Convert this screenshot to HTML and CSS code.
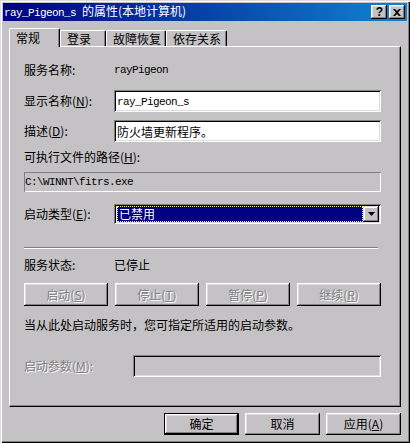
FILE: index.html
```html
<!DOCTYPE html>
<html lang="zh-CN">
<head>
    <meta charset="UTF-8">
    <title>ray_Pigeon_s 的属性(本地计算机)</title>
    <link rel="stylesheet" href="styles.css">
</head>
<body>
    <div class="window">
        <div class="titlebar">
            <span class="title"><span class="mono">ray_Pigeon_s </span>的属性(本地计算机)</span>
            <div class="title-buttons">
                <span class="tbtn help">?</span>
                <span class="tbtn">
                    <svg width="8" height="7" viewBox="0 0 8 7"><path d="M0 0h2l2 2 2-2h2L5 3.5 8 7H6L4 5 2 7H0l3-3.5z" fill="#000"/></svg>
                </span>
            </div>
        </div>

        <div class="tabs">
            <div class="tab active" style="width: 51px">常规</div>
            <div class="tab" style="width: 46px">登录</div>
            <div class="tab" style="width: 60px">故障恢复</div>
            <div class="tab" style="width: 61px">依存关系</div>
        </div>

        <div class="panel">
            <div class="field row-name">
                <span>服务名称:</span>
                <span class="mono">rayPigeon</span>
            </div>

            <div class="field row-display">
                <span>显示名称(<u>N</u>):</span>
                <div class="input"><span class="mono">ray_Pigeon_s</span></div>
            </div>

            <div class="field row-desc">
                <span>描述(<u>D</u>):</span>
                <div class="input">防火墙更新程序。</div>
            </div>

            <div class="row-path-label">可执行文件的路径(<u>H</u>):</div>
            <div class="static"><span class="mono">C:\WINNT\fitrs.exe</span></div>

            <div class="field row-startup">
                <span>启动类型(<u>E</u>):</span>
                <div class="combo">
                    <div class="combo-value">已禁用</div>
                    <div class="combo-btn">
                        <svg width="7" height="4" viewBox="0 0 7 4"><path d="M0 0h7L3.5 4z" fill="#000"/></svg>
                    </div>
                </div>
            </div>

            <div class="separator"></div>

            <div class="field row-status">
                <span>服务状态:</span>
                <span>已停止</span>
            </div>

            <div class="service-buttons">
                <div class="btn disabled">启动(<u>S</u>)</div>
                <div class="btn disabled">停止(<u>T</u>)</div>
                <div class="btn disabled">暂停(<u>P</u>)</div>
                <div class="btn disabled">继续(<u>R</u>)</div>
            </div>

            <div class="hint">当从此处启动服务时，您可指定所适用的启动参数。</div>

            <div class="field row-params">
                <span class="disabled-text">启动参数(<u>M</u>):</span>
                <div class="input input-disabled"></div>
            </div>
        </div>

        <div class="footer">
            <div class="btn default">确定</div>
            <div class="btn">取消</div>
            <div class="btn">应用(<u>A</u>)</div>
        </div>
    </div>
</body>
</html>
```

FILE: styles.css
```css
* {
    box-sizing: border-box;
}
body {
    margin: 0;
    background: #c4c2c4;
    font-family: "Noto Sans CJK SC", sans-serif;
    font-size: 12px;
    line-height: 14px;
    color: #000;
}
u {
    text-decoration: underline;
    text-underline-offset: 1px;
}
.mono {
    font-family: "Liberation Mono", monospace;
    font-size: 11px;
    letter-spacing: -0.6px;
    white-space: pre;
}
.window {
    width: 410px;
    height: 443px;
    padding: 3px;
    background: #c4c2c4;
    box-shadow: inset 1px 1px #dcdcdc, inset 2px 2px #fff, inset -1px -1px #000, inset -2px -2px #808080;
}
.titlebar {
    height: 18px;
    display: flex;
    align-items: center;
    justify-content: space-between;
    padding: 0 2px 0 1px;
    background: linear-gradient(to right, #000080, #1084d0);
    color: #fff;
}
.title-buttons {
    display: flex;
    gap: 2px;
}
.tbtn {
    width: 16px;
    height: 14px;
    display: flex;
    align-items: center;
    justify-content: center;
    background: #c4c2c4;
    color: #000;
    box-shadow: inset -1px -1px #000, inset 1px 1px #fff, inset -2px -2px #808080, inset 2px 2px #dcdcdc;
}
.tbtn.help {
    font-family: "Liberation Sans", sans-serif;
    font-weight: bold;
    font-size: 12px;
    padding-left: 1px;
}
.tabs {
    display: flex;
    align-items: flex-end;
    height: 18px;
    margin: 7px 6px 0;
    position: relative;
    z-index: 1;
}
.tab {
    height: 16px;
    padding-left: 6px;
    line-height: 16px;
    border-top: 1px solid #fff;
    border-left: 1px solid #fff;
    border-right: 1px solid #000;
    border-radius: 2px 2px 0 0;
    box-shadow: inset -1px 0 #808080;
    background: #c4c2c4;
}
.tab.active {
    height: 19px;
    margin-bottom: -1px;
    line-height: 18px;
}
.panel {
    height: 361px;
    margin: 0 6px;
    padding: 12px 19px 0 14px;
    border: 1px solid;
    border-color: #fff #000 #000 #fff;
    box-shadow: inset -1px -1px #808080;
}
.field {
    display: grid;
    grid-template-columns: 90px 1fr;
    align-items: center;
}
.row-name {
    height: 22px;
}
.row-display {
    margin-top: 9px;
}
.row-desc {
    margin-top: 8px;
}
.input {
    height: 22px;
    display: flex;
    align-items: center;
    padding: 1px 3px 0;
    background: #fff;
    box-shadow: inset 1px 1px #808080, inset -1px -1px #fff, inset 2px 2px #000, inset -2px -2px #dcdcdc;
}
.input-disabled {
    background: #c4c2c4;
}
.row-path-label {
    height: 16px;
    line-height: 16px;
    margin-top: 7px;
}
.static {
    height: 20px;
    margin-top: 7px;
    padding-left: 1px;
    display: flex;
    align-items: center;
    box-shadow: inset 1px 1px #808080, inset -1px -1px #fff;
}
.row-startup {
    margin-top: 12px;
}
.combo {
    height: 20px;
    display: flex;
    padding: 2px;
    background: #fff;
    box-shadow: inset 1px 1px #808080, inset -1px -1px #fff, inset 2px 2px #000, inset -2px -2px #dcdcdc;
}
.combo-value {
    flex: 1;
    margin: 0 0 0 1px;
    padding-left: 1px;
    line-height: 14px;
    background: #000080;
    color: #fff;
    border: 1px dotted #ffff00;
}
.combo-btn {
    width: 16px;
    display: flex;
    align-items: center;
    justify-content: center;
    background: #c4c2c4;
    box-shadow: inset -1px -1px #000, inset 1px 1px #dcdcdc, inset -2px -2px #808080, inset 2px 2px #fff;
}
.separator {
    height: 2px;
    margin: 23px 3px 0 0;
    border-top: 1px solid #808080;
    border-bottom: 1px solid #fff;
}
.row-status {
    height: 20px;
    margin-top: 6px;
}
.service-buttons {
    display: grid;
    grid-template-columns: repeat(4, 1fr);
    gap: 7px;
    margin-top: 8px;
}
.btn {
    height: 23px;
    display: flex;
    align-items: center;
    justify-content: center;
    background: #c4c2c4;
    box-shadow: inset -1px -1px #000, inset 1px 1px #fff, inset -2px -2px #808080, inset 2px 2px #dcdcdc;
}
.btn.disabled,
.disabled-text {
    color: #808080;
    text-shadow: 1px 1px 0 #fff;
}
.hint {
    height: 18px;
    line-height: 18px;
    margin-top: 10px;
}
.row-params {
    grid-template-columns: 109px 1fr;
    margin-top: 21px;
}
.footer {
    display: flex;
    justify-content: flex-end;
    gap: 6px;
    margin: 6px 6px 0;
}
.footer .btn {
    width: 75px;
    height: 22px;
}
.btn.default {
    border: 1px solid #000;
}
```
